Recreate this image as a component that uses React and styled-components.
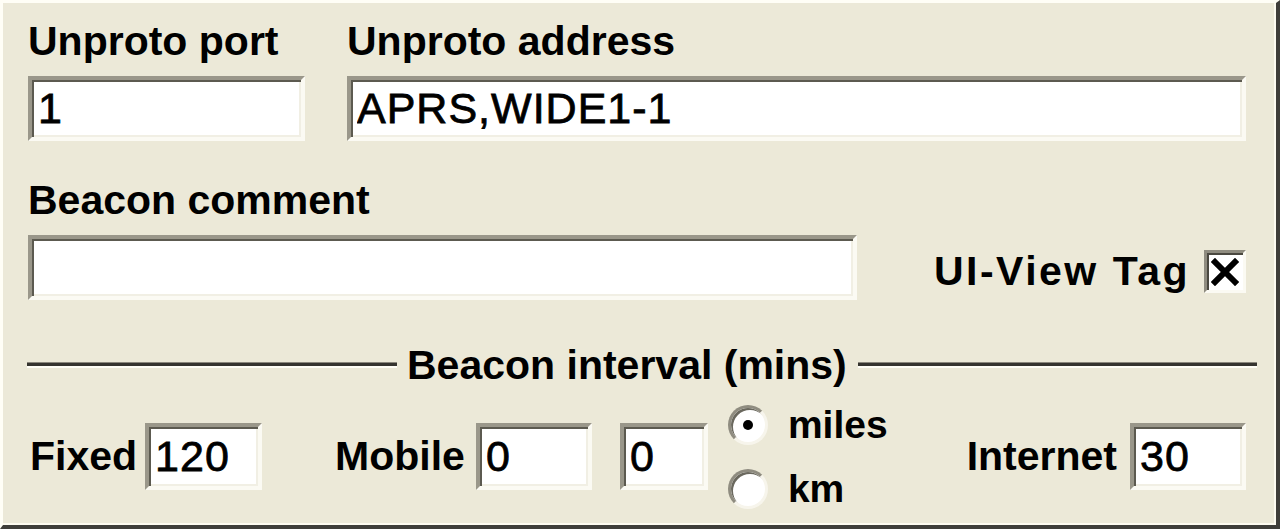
import React from "react";
import styled, { createGlobalStyle } from "styled-components";

const GlobalStyle = createGlobalStyle`
  html, body {
    margin: 0;
    padding: 0;
    background: #ece9d8;
  }
  body {
    font-family: "Liberation Sans", Arial, sans-serif;
    color: #000;
  }
`;

// dialog panel, classic raised frame
const Frame = styled.div`
  box-sizing: border-box;
  width: 1280px;
  height: 529px;
  background: #ece9d8;
  border-top: 3px solid #fffef6;
  border-left: 3px solid #fffef6;
  border-right: 4px solid #3f3e3a;
  border-bottom: 4px solid #3f3e3a;
  box-shadow: inset -2px -2px 0 #fdfbf0;
  padding: 14px 30px 0 25px;
  display: flex;
  flex-direction: column;
  overflow: hidden;
`;

const Row = styled.div`
  display: flex;
  gap: ${(p) => p.$gap || 0}px;
  margin-top: ${(p) => p.$top || 0}px;
`;

const Column = styled.div`
  display: flex;
  flex-direction: column;
  flex: ${(p) => (p.$width ? `0 0 ${p.$width}px` : "1")};
`;

const Label = styled.div`
  font-weight: 700;
  font-size: 41px;
  line-height: 48px;
  height: 48px;
  margin-bottom: 11px;
  white-space: nowrap;
`;

const TextBox = styled.input`
  box-sizing: border-box;
  width: ${(p) => (p.$width ? `${p.$width}px` : "100%")};
  height: ${(p) => p.$height || 65}px;
  margin: 0;
  padding: 0 0 0 6px;
  background: #fff;
  border-style: solid;
  border-width: 4px;
  border-color: #9a978a #fbfaf3 #fbfaf3 #9a978a;
  box-shadow: inset 2px 2px 0 #5c5a50, inset -2px -2px 0 #f1efe4;
  font-family: "Liberation Sans", Arial, sans-serif;
  font-size: 43px;
  letter-spacing: 1px;
  -webkit-text-stroke: 0.8px #000;
  color: #000;
  outline: none;
  flex: none;
`;

const TagGroup = styled.div`
  margin-left: auto;
  align-self: flex-end;
  height: 65px;
  padding-top: 8px;
  box-sizing: border-box;
  display: flex;
  align-items: center;
  gap: 14px;
  font-weight: 700;
  font-size: 41px;
  letter-spacing: 2.5px;
  white-space: nowrap;
`;

const CheckBox = styled.span`
  box-sizing: border-box;
  width: 42px;
  height: 43px;
  background: #fff;
  border-style: solid;
  border-width: 3px;
  border-color: #8f8c80 #fbfaf3 #fbfaf3 #8f8c80;
  box-shadow: inset 2px 2px 0 #4a4840;
  display: flex;
  align-items: center;
  justify-content: center;
`;

const Rule = styled.div`
  display: flex;
  align-items: center;
  height: 48px;
  margin: 41px -11px 0 -1px;
`;

const Line = styled.div`
  flex: ${(p) => (p.$width ? `0 0 ${p.$width}px` : "1")};
  height: 3px;
  background: #35342f;
  border-top: 1px solid #8a877c;
  border-bottom: 2px solid #fffef6;
`;

const RuleTitle = styled.span`
  font-weight: 700;
  font-size: 41px;
  margin: 0 11px 0 10px;
  white-space: nowrap;
`;

const BottomRow = styled.div`
  display: flex;
  align-items: center;
  height: 103px;
  margin-top: 16px;
`;

const InlineLabel = styled.span`
  font-weight: 700;
  font-size: 41px;
  white-space: nowrap;
  margin-left: ${(p) => p.$left || 0}px;
  margin-right: ${(p) => p.$right || 0}px;
`;

const Spacer = styled.span`
  flex: none;
  width: ${(p) => p.$w}px;
`;

const RadioGroup = styled.div`
  display: flex;
  flex-direction: column;
  justify-content: space-between;
  height: 100px;
  margin-left: 20px;
`;

const RadioRow = styled.label`
  display: flex;
  align-items: center;
  gap: 20px;
  height: 36px;
  font-weight: 700;
  font-size: 39px;
`;

const RadioDot = styled.span`
  box-sizing: border-box;
  width: 40px;
  height: 40px;
  border-radius: 50%;
  background: #fff;
  border: 3px solid;
  border-color: #8f8c80 #f7f5ec #f7f5ec #8f8c80;
  box-shadow: inset 2px 2px 0 #6a685e;
  display: flex;
  align-items: center;
  justify-content: center;

  &::after {
    content: "";
    width: 10px;
    height: 10px;
    border-radius: 50%;
    background: #000;
    display: ${(p) => (p.$checked ? "block" : "none")};
  }
`;

const InternetGroup = styled.div`
  margin-left: auto;
  display: flex;
  align-items: center;
`;

function App() {
  return (
    <>
      <GlobalStyle />
      <Frame>
        <Row $gap={42}>
          <Column $width={277}>
            <Label>Unproto port</Label>
            <TextBox readOnly value="1" />
          </Column>
          <Column>
            <Label>Unproto address</Label>
            <TextBox readOnly value="APRS,WIDE1-1" />
          </Column>
        </Row>

        <Row $top={35}>
          <Column $width={829}>
            <Label>Beacon comment</Label>
            <TextBox readOnly value="" />
          </Column>
          <TagGroup>
            UI-View Tag
            <CheckBox>
              <svg width="28" height="28" viewBox="0 0 28 28">
                <path d="M4 4 L24 24 M24 4 L4 24" stroke="#000" strokeWidth="6" strokeLinecap="square" />
              </svg>
            </CheckBox>
          </TagGroup>
        </Row>

        <Rule>
          <Line $width={370} />
          <RuleTitle>Beacon interval (mins)</RuleTitle>
          <Line />
        </Rule>

        <BottomRow>
          <InlineLabel $left={2} $right={8}>Fixed</InlineLabel>
          <TextBox readOnly value="120" $width={117} $height={67} />
          <InlineLabel $left={73} $right={11}>Mobile</InlineLabel>
          <TextBox readOnly value="0" $width={116} $height={67} />
          <Spacer $w={28} />
          <TextBox readOnly value="0" $width={88} $height={67} />
          <RadioGroup>
            <RadioRow>
              <RadioDot $checked />
              miles
            </RadioRow>
            <RadioRow>
              <RadioDot />
              km
            </RadioRow>
          </RadioGroup>
          <InternetGroup>
            <InlineLabel $right={13}>Internet</InlineLabel>
            <TextBox readOnly value="30" $width={116} $height={67} />
          </InternetGroup>
        </BottomRow>
      </Frame>
    </>
  );
}

export default App;
